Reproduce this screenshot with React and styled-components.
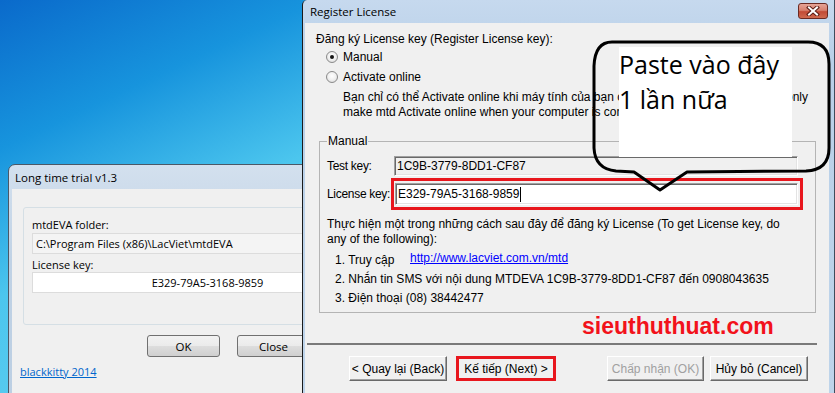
import React from 'react';
import styled, { createGlobalStyle } from 'styled-components';

const GlobalStyle = createGlobalStyle`
  html, body {
    margin: 0;
    padding: 0;
  }
  body {
    width: 835px;
    height: 393px;
    overflow: hidden;
  }
`;

export default function App() {
  return (
    <>
      <GlobalStyle />
      <Desktop>
        <TrialWindow>
          <TrialTitle>Long time trial v1.3</TrialTitle>
          <TrialClient>
            <TrialGroup>
              <TrialLabel>mtdEVA folder:</TrialLabel>
              <TrialField>C:\Program Files (x86)\LacViet\mtdEVA</TrialField>
              <TrialLabel $gap>License key:</TrialLabel>
              <TrialField $white $center>E329-79A5-3168-9859</TrialField>
            </TrialGroup>
            <TrialButtons>
              <AeroButton>OK</AeroButton>
              <AeroButton>Close</AeroButton>
            </TrialButtons>
            <FooterLink>blackkitty 2014</FooterLink>
          </TrialClient>
        </TrialWindow>

        <RegisterWindow>
          <TitleBar>
            <span>Register License</span>
            <CloseButton>
              <svg width="14" height="10" viewBox="0 0 14 10">
                <path d="M3 1.5 L11 8.5 M11 1.5 L3 8.5" stroke="#5a1c14" strokeWidth="4" strokeLinecap="square" />
                <path d="M3 1.5 L11 8.5 M11 1.5 L3 8.5" stroke="#ffffff" strokeWidth="2" strokeLinecap="square" />
              </svg>
            </CloseButton>
          </TitleBar>
          <RegisterClient>
            <Heading>Đăng ký License key (Register License key):</Heading>
            <RadioRow>
              <Radio $checked />
              <span>Manual</span>
            </RadioRow>
            <RadioRow $gap={6}>
              <Radio />
              <span>Activate online</span>
            </RadioRow>
            <Note>
              <Line>Bạn chỉ có thể Activate online khi máy tính của bạn có kết nối với Internet (You can only</Line>
              <Line>make mtd Activate online when your computer is connected to Internet)</Line>
            </Note>
            <GroupBox>
              <GroupLegend>Manual</GroupLegend>
              <FieldRow>
                <FieldLabel $width={67}>Test key:</FieldLabel>
                <KeyInput $readOnly>1C9B-3779-8DD1-CF87</KeyInput>
              </FieldRow>
              <FieldRow $gap={2}>
                <FieldLabel $width={64}>License key:</FieldLabel>
                <RedFrame>
                  <KeyInput $height={22}>
                    <Caret>E329-79A5-3168-9859</Caret>
                  </KeyInput>
                </RedFrame>
              </FieldRow>
              <Instructions>
                <Line>Thực hiện một trong những cách sau đây để đăng ký License (To get License key, do</Line>
                <Line>any of the following):</Line>
              </Instructions>
              <Steps>
                <Step $gap={6}>
                  <StepLead>1. Truy cập</StepLead>
                  <WebLink>http://www.lacviet.com.vn/mtd</WebLink>
                </Step>
                <Step>2. Nhắn tin SMS với nội dung MTDEVA 1C9B-3779-8DD1-CF87 đến 0908043635</Step>
                <Step>3. Điện thoại (08) 38442477</Step>
              </Steps>
            </GroupBox>
            <Watermark>sieuthuthuat.com</Watermark>
            <Separator />
            <WizardButtons>
              <ClassicButton $space={0} $width={98}>&lt; Quay lại (Back)</ClassicButton>
              <ClassicButton $space={9} $width={100} $marked>Kế tiếp (Next) &gt;</ClassicButton>
              <ClassicButton $space={51} $width={97} disabled>Chấp nhận (OK)</ClassicButton>
              <ClassicButton $space={6} $width={98}>Hủy bỏ (Cancel)</ClassicButton>
            </WizardButtons>
          </RegisterClient>
        </RegisterWindow>

        <CalloutNote>
          Paste vào đây
          <br />
          1 lần nữa
        </CalloutNote>
        <CalloutOutline width="835" height="393" viewBox="0 0 835 393">
          <path
            d="M612 42 L808 42 Q829 42 829 64 L829 148 Q829 170 806 171 L687 172 L660 190 L634 172 L616 171 Q595 169 594 148 L594 66 Q595 42 612 42 Z"
            fill="none"
            stroke="#000"
            strokeWidth="3"
            strokeLinejoin="round"
          />
        </CalloutOutline>
      </Desktop>
    </>
  );
}

// desktop
const Desktop = styled.div`
  position: relative;
  width: 835px;
  height: 393px;
  overflow: hidden;
  background: linear-gradient(155deg, #0a6acb 0%, #1794dd 19%, #4cc6ee 38%, #7ad8f4 100%);
`;

// left dialog (Aero)
const TrialWindow = styled.div`
  position: absolute;
  left: 8px;
  top: 164px;
  width: 400px;
  height: 240px;
  box-sizing: border-box;
  display: flex;
  flex-direction: column;
  padding: 0 3px 3px 3px;
  background: linear-gradient(#d3e0ee, #c0d2e5 40%, #bccfe3);
  border: 1px solid #4b5867;
  border-radius: 7px 7px 0 0;
  font-family: "Open Sans", "Liberation Sans", sans-serif;
  font-size: 11px;
  color: #000;
`;

const TrialTitle = styled.div`
  height: 24px;
  display: flex;
  align-items: center;
  padding-left: 3px;
  font-size: 11.5px;
`;

const TrialClient = styled.div`
  flex: 1;
  background: #f0f0f0;
  padding: 18px 0 0 11px;
`;

const TrialGroup = styled.div`
  width: 360px;
  height: 118px;
  box-sizing: border-box;
  border: 1px solid #d5dfe5;
  border-radius: 3px;
  padding: 9px 0 0 8px;
`;

const TrialLabel = styled.div`
  line-height: 15px;
  margin-top: ${(p) => (p.$gap ? '3px' : '0')};
`;

const TrialField = styled.div`
  width: 348px;
  height: 21px;
  box-sizing: border-box;
  margin-top: ${(p) => (p.$white ? '0' : '1px')};
  padding-left: 3px;
  line-height: 19px;
  border: 1px solid #dcdcdc;
  background: ${(p) => (p.$white ? '#ffffff' : '#f4f4f4')};
  text-align: ${(p) => (p.$center ? 'center' : 'left')};
  white-space: nowrap;
`;

const TrialButtons = styled.div`
  display: flex;
  gap: 17px;
  margin-top: 10px;
  padding-left: 124px;
`;

const AeroButton = styled.button`
  width: 73px;
  height: 22px;
  padding: 0;
  border: 1px solid #707070;
  border-radius: 3px;
  background: linear-gradient(#f2f2f2 0%, #ebebeb 48%, #dddddd 52%, #cfcfcf 100%);
  font-family: "Open Sans", "Liberation Sans", sans-serif;
  font-size: 11.5px;
  color: #000;
`;

const FooterLink = styled.div`
  margin: 8px 0 0 -3px;
  line-height: 14px;
  color: #0066cc;
  text-decoration: underline;
`;

// right dialog
const RegisterWindow = styled.div`
  position: absolute;
  left: 302px;
  top: 0;
  width: 533px;
  height: 400px;
  box-sizing: border-box;
  display: flex;
  flex-direction: column;
  padding: 0 5px 0 2px;
  border-left: 1px solid #1b1b1b;
  border-right: 1px solid #3e4c5c;
  border-top-left-radius: 5px;
  background: linear-gradient(#c6d9ee, #b9d0e8 60px, #bed4ea);
`;

const TitleBar = styled.div`
  height: 23px;
  display: flex;
  align-items: flex-start;
  justify-content: space-between;
  font-family: "Open Sans", "Liberation Sans", sans-serif;
  font-size: 11.5px;
  color: #000;

  span {
    padding: 4px 0 0 5px;
  }
`;

const CloseButton = styled.div`
  width: 30px;
  height: 16px;
  margin: 3px 1px 0 0;
  box-sizing: border-box;
  display: flex;
  align-items: center;
  justify-content: center;
  border: 1px solid #6b2a22;
  border-radius: 3px;
  background: linear-gradient(#e6a497 0%, #d7816f 45%, #c24a35 55%, #cf6a4f 100%);
`;

const RegisterClient = styled.div`
  flex: 1;
  background: #f0f0f0;
  padding: 9px 0 0 11px;
  font-family: "Liberation Sans", Arial, sans-serif;
  font-size: 12px;
  color: #000;
`;

const Heading = styled.div`
  line-height: 14px;
`;

const RadioRow = styled.div`
  display: flex;
  align-items: center;
  height: 14px;
  margin-top: ${(p) => p.$gap || 4}px;
  padding-left: 10px;
`;

const Radio = styled.span`
  position: relative;
  width: 12px;
  height: 12px;
  margin-right: 5px;
  box-sizing: border-box;
  border-radius: 50%;
  border: 1px solid #8a8a8a;
  background: radial-gradient(circle at 50% 40%, #ffffff 0%, #f0f0f0 50%, #d2d2d2 100%);

  &::after {
    content: '';
    display: ${(p) => (p.$checked ? 'block' : 'none')};
    position: absolute;
    left: 3px;
    top: 3px;
    width: 4px;
    height: 4px;
    border-radius: 50%;
    background: #141414;
  }
`;

const Note = styled.div`
  margin-top: 6px;
  padding-left: 27px;
  line-height: 15px;
`;

const Line = styled.div`
  white-space: nowrap;
`;

const GroupBox = styled.fieldset`
  width: 497px;
  box-sizing: border-box;
  margin: 14px 0 0 3px;
  padding: 8px 0 6px 7px;
  border: 1px solid #b4b4b4;
  min-width: 0;
`;

const GroupLegend = styled.legend`
  padding: 0 1px;
  line-height: 14px;
`;

const FieldRow = styled.div`
  display: flex;
  align-items: center;
  margin-top: ${(p) => p.$gap || 0}px;
`;

const FieldLabel = styled.div`
  width: ${(p) => p.$width}px;
  flex-shrink: 0;
  white-space: nowrap;
  letter-spacing: -0.3px;
`;

const KeyInput = styled.div`
  width: ${(p) => (p.$readOnly ? 404 : 403)}px;
  height: ${(p) => p.$height || 20}px;
  box-sizing: border-box;
  display: flex;
  align-items: center;
  padding-left: 2px;
  border: 1px solid;
  border-color: #a0a0a0 #ffffff #ffffff #a0a0a0;
  box-shadow: inset 1px 1px 0 #696969, inset -1px -1px 0 #e3e3e3;
  background: ${(p) => (p.$readOnly ? '#f0f0f0' : '#ffffff')};
`;

const Caret = styled.span`
  border-right: 1px solid #000;
  padding-right: 1px;
  line-height: 15px;
`;

const RedFrame = styled.div`
  border: 3px solid #e8161d;
  padding: 2px 2px 2px 1px;
`;

const Instructions = styled.div`
  margin-top: 7px;
  line-height: 15px;
`;

const Steps = styled.div`
  padding-left: 8px;
`;

const Step = styled.div`
  display: flex;
  line-height: 15px;
  margin-top: ${(p) => p.$gap || 4}px;
  white-space: nowrap;
`;

const StepLead = styled.span`
  width: 75px;
`;

const WebLink = styled.span`
  color: #0000ff;
  text-decoration: underline;
  position: relative;
  top: -2px;
`;

const Watermark = styled.div`
  margin: 0 0 0 266px;
  height: 26px;
  line-height: 26px;
  font-weight: bold;
  font-size: 23px;
  color: #f2121b;
`;

const Separator = styled.div`
  margin: 4px 0 0 -9px;
  width: 510px;
  height: 2px;
  background: #7a7a7a;
`;

const WizardButtons = styled.div`
  display: flex;
  margin-top: 11px;
  padding-left: 33px;
`;

const ClassicButton = styled.button`
  width: ${(p) => p.$width}px;
  height: 25px;
  margin-left: ${(p) => p.$space}px;
  padding: 0;
  box-sizing: border-box;
  font-family: "Liberation Sans", Arial, sans-serif;
  font-size: 12px;
  color: #000;
  background: #f0f0f0;
  border: ${(p) => (p.$marked ? '3px solid #e8161d' : '1px solid')};
  border-color: ${(p) => (p.$marked ? '#e8161d' : '#ffffff #696969 #696969 #ffffff')};
  box-shadow: ${(p) => (p.$marked ? 'none' : 'inset -1px -1px 0 #a0a0a0')};

  &:disabled {
    color: #a0a0a0;
  }
`;

// annotation callout over the screenshot
const CalloutNote = styled.div`
  position: absolute;
  left: 619px;
  top: 47px;
  width: 173px;
  height: 110px;
  box-sizing: border-box;
  padding: 0;
  background: #ffffff;
  font-family: "Open Sans", sans-serif;
  font-size: 25px;
  line-height: 35px;
  color: #000;
  white-space: nowrap;
`;

const CalloutOutline = styled.svg`
  position: absolute;
  left: 0;
  top: 0;
  pointer-events: none;
`;
